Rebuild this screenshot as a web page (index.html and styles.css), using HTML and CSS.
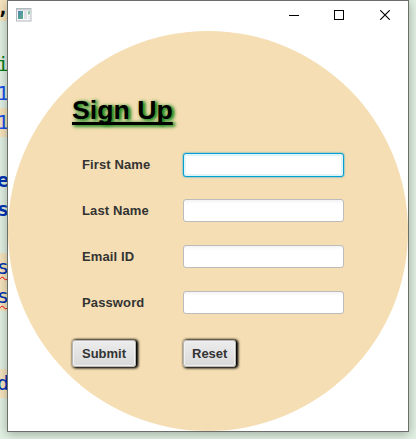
FILE: index.html
```
<!DOCTYPE html>
<html lang="en">
<head>
<meta charset="utf-8">
<title>Sign Up</title>
<link rel="stylesheet" href="styles.css">
</head>
<body>
<div class="editor">
  <div class="line marked punct">,</div>
  <div class="line"></div>
  <div class="line string">i</div>
  <div class="line number">1</div>
  <div class="line number marked">1</div>
  <div class="line"></div>
  <div class="line strong">e</div>
  <div class="line strong">s</div>
  <div class="line"></div>
  <div class="line marked typo">s</div>
  <div class="line marked typo">s</div>
  <div class="line"></div>
  <div class="line"></div>
  <div class="line marked">d</div>
</div>
<main class="window">
  <header class="titlebar">
    <svg class="app-icon" width="16" height="14" viewBox="0 0 16 14">
      <defs>
        <linearGradient id="pane" x1="0" y1="0" x2="1" y2="1"><stop offset="0" stop-color="#5084b4"/><stop offset="1" stop-color="#59b083"/></linearGradient>
      </defs>
      <rect x=".5" y=".5" width="14.5" height="12.5" fill="#f7f8f9" stroke="#b4b9c0"/>
      <rect x="1" y="1" width="13.5" height="1.5" fill="#cbd0d6"/>
      <rect x="2" y="3" width="5" height="8" fill="url(#pane)"/>
      <rect x="8" y="3" width="3" height="8" fill="#dfe1e4"/>
      <path d="M12 3H14V6L12 7Z" fill="#91c9a8"/>
      <rect x="12" y="8" width="2" height="3" fill="#e8eaec"/>
    </svg>
    <div class="controls">
      <svg width="10" height="10" shape-rendering="crispEdges"><path d="M0 5.5H10" stroke="#000"/></svg>
      <svg width="10" height="10" shape-rendering="crispEdges"><path d="M.5.5H9.5V9.5H.5Z" fill="none" stroke="#000"/></svg>
      <svg class="close" width="10" height="10"><path d="M.2.2L9.8 9.8M9.8.2L.2 9.8" stroke="#000" stroke-width="1.15"/></svg>
    </div>
  </header>
  <form class="scene">
    <h1>Sign Up</h1>
    <label for="first">First Name</label><input id="first" class="focused" type="text">
    <label for="last">Last Name</label><input id="last" type="text">
    <label for="email">Email ID</label><input id="email" type="text">
    <label for="password">Password</label><input id="password" type="password">
    <button type="button">Submit</button>
    <button type="button" class="reset">Reset</button>
  </form>
</main>
</body>
</html>
```

FILE: styles.css
```
* { box-sizing: border-box; }
body {
  margin: 0;
  height: 439px;
  display: flex;
  overflow: hidden;
  background: #e0f0e2;
  font-family: "Liberation Sans", Arial, sans-serif;
}
.editor {
  flex: 0 0 7px;
  width: 7px;
  min-width: 0;
  margin-top: -8px;
  color: #0033b3;
  font: 20px/29px "DejaVu Sans Mono", monospace;
}
.line {
  width: 7px;
  height: 29px;
  text-indent: -3px;
  white-space: nowrap;
}
.marked { background: #f5e4bd; }
.punct { color: #080808; font-weight: bold; padding-top: 1px; }
.string { color: #067d17; }
.number { color: #1750eb; }
.strong { font-weight: bold; }
.typo { text-decoration: underline wavy #f00 1px; text-underline-offset: 2px; }
.window {
  position: relative;
  flex: 0 0 402px;
  height: 432px;
  border: 1px solid #6b6e69;
  background: #fff;
  box-shadow: 0 2px 10px rgba(0, 0, 0, .3);
}
.titlebar {
  height: 30px;
  padding: 7px 18px 0 8px;
  display: flex;
  justify-content: space-between;
}
.app-icon { display: block; }
.controls { display: flex; gap: 35px; padding-top: 2px; }
.controls svg { display: block; }
.controls .close { margin-left: 1px; }
.scene {
  width: 400px;
  height: 400px;
  padding: 63px 64px 0;
  border-radius: 50%;
  background: #f5deb3;
  display: grid;
  grid-template-columns: 111px 161px;
  grid-template-rows: 47px repeat(4, 46px) 56px;
  align-items: center;
  align-content: start;
}
h1 {
  grid-column: 1 / -1;
  align-self: start;
  margin: 0;
  font-size: 26.67px;
  line-height: 33px;
  color: #000;
  text-decoration: underline 3px;
  text-underline-offset: 3px;
  text-decoration-skip-ink: none;
  text-shadow: 2px 1px 4px #228b22, 2px 1px 3px #228b22;
}
label, button {
  color: #333;
  font-family: inherit;
  font-size: 13px;
  font-weight: bold;
}
label { padding-left: 10px; letter-spacing: .12px; }
input {
  width: 161px;
  height: 23px;
  margin: 1px 0 0;
  padding: 0 7px;
  border: 1px solid #bcbcbc;
  border-radius: 3px;
  background: linear-gradient(#f3f3f3, #fff 4px);
  outline: 0;
}
.focused {
  height: 24px;
  border-color: #039ed3;
  background: #fff;
  box-shadow: inset 0 0 0 2px #e0f3f9, 0 0 2px #039ed3;
}
button {
  justify-self: start;
  height: 27px;
  padding: 0 9px;
  border: 1px solid #b5b5b5;
  border-radius: 3px;
  background: linear-gradient(#ececec, #d9d9d9);
  box-shadow: inset 0 0 0 1px #f1f1f1, 1px 0 3px #000, 1.5px .5px 3px #000;
}
.reset { padding: 0 8px; }
```
